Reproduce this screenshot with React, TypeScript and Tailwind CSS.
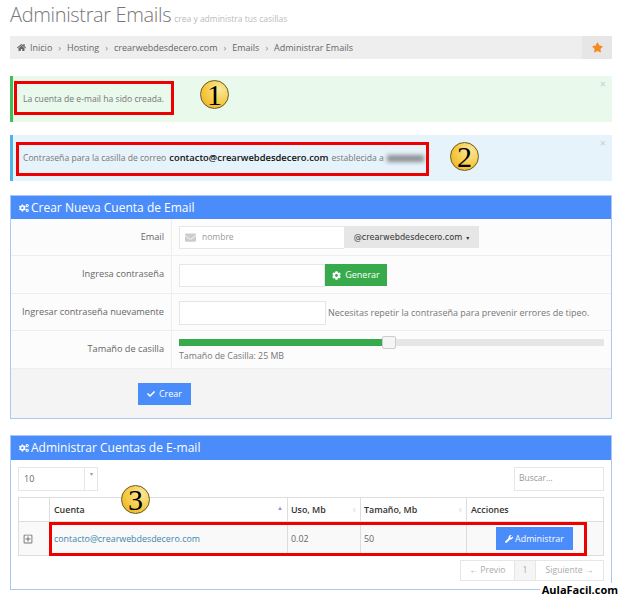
import { FaCheck, FaCog, FaCogs, FaEnvelope, FaHome, FaRegPlusSquare, FaStar, FaWrench } from "react-icons/fa";

const crumbs = ["Hosting", "crearwebdesdecero.com", "Emails", "Administrar Emails"];

function Badge({ n, className }: { n: string; className: string }) {
  return (
    <div
      className={`absolute flex h-[29px] w-[29px] items-center justify-center rounded-full border border-[#6b5a20] bg-[radial-gradient(circle_at_70%_30%,#fbe89a,#f5c63c_60%,#e8a92a)] font-['Liberation_Serif',serif] text-[30px] leading-none text-black ${className}`}
    >
      {n}
    </div>
  );
}

function Row({ label, children, h, pt }: { label: string; children: React.ReactNode; h: string; pt: string }) {
  return (
    <div className={`flex border-b border-[#eeeeee] bg-[#fcfcfc] ${h}`}>
      <div className="w-[161px] shrink-0 border-r border-[#eeeeee] pt-[11px] pr-[7px] text-right text-[9.2px] text-[#666666]">
        {label}
      </div>
      <div className={`flex min-w-0 flex-1 pl-[7px] ${pt}`}>{children}</div>
    </div>
  );
}

export default function App() {
  return (
    <div className="relative h-[597px] w-[618px] overflow-hidden bg-white font-['Open_Sans',sans-serif]">
      <div className="pr-[6px] pl-[10px]">
        <div className="flex h-[36px] items-baseline">
          <h1 className="text-[20px] leading-[30px] font-light tracking-[-0.35px] text-[#777777]">Administrar Emails</h1>
          <span className="ml-[3px] text-[8.5px] text-[#bbbbbb]">crea y administra tus casillas</span>
        </div>

        <div className="flex h-[23px] items-center bg-[#eeeeee] pl-[7px] text-[9px] text-[#666666]">
          <FaHome className="mr-1 text-[9px]" />
          <span>Inicio</span>
          {crumbs.map((c) => (
            <span key={c} className="flex items-center">
              <span className="mx-[6px] text-[#888888]">›</span>
              {c}
            </span>
          ))}
          <div className="ml-auto flex h-full w-[30px] items-center justify-center bg-[#e6e6e6]">
            <FaStar className="text-[11px] text-[#f58a1f]" />
          </div>
        </div>

        <div className="relative mt-[17px] flex h-[46px] items-center border-l-[3px] border-[#3fbf55] bg-[#e9f9ec] pl-[10px] text-[8.6px] text-[#777777]">
          La cuenta de e-mail ha sido creada.
          <span className="absolute top-0 right-[6px] text-[11px] text-[#cccccc]">×</span>
        </div>

        <div className="relative mt-[13px] flex h-[46px] items-center border-l-[3px] border-[#4fb3e8] bg-[#e6f3fa] pl-[10px] text-[8.6px] text-[#777777]">
          <span>Contraseña para la casilla de correo</span>
          <b className="mx-[3px] text-[9.4px] font-semibold text-[#111111]">contacto@crearwebdesdecero.com</b>
          <span>establecida a</span>
          <span className="ml-[3px] h-[7px] w-[37px] bg-[#8a8f93] blur-[2px]" />
          <span className="absolute top-0 right-[6px] text-[11px] text-[#cccccc]">×</span>
        </div>

        <section className="mt-[14px] border border-[#a9c7f7]">
          <h2 className="flex h-[23px] items-center gap-[2px] bg-[#4a8cfa] pl-2 text-[12px] text-white">
            <FaCogs className="text-[10px]" />
            Crear Nueva Cuenta de Email
          </h2>
          <Row label="Email" h="h-[37px]" pt="pt-[7px]">
            <div className="flex h-[23px] w-[165px] items-center border border-[#e6e6e6] border-r-0 bg-white pl-[5px] text-[8.5px] text-[#999999]">
              <FaEnvelope className="mr-[6px] text-[11px] text-[#cccccc]" />
              nombre
            </div>
            <div className="flex h-[22px] w-[135px] items-center justify-center gap-1 bg-[#e6e6e6] font-['DejaVu_Sans',sans-serif] text-[8.2px] text-[#333333]">
              @crearwebdesdecero.com
              <span className="text-[6px]">▾</span>
            </div>
          </Row>
          <Row label="Ingresa contraseña" h="h-[38px]" pt="pt-[8px]">
            <div className="h-[23px] w-[146px] border border-[#e6e6e6] bg-white" />
            <div className="flex h-[22px] w-[62px] items-center justify-center gap-1 bg-[#37aa4b] text-[9px] text-white">
              <FaCog className="text-[9px]" />
              Generar
            </div>
          </Row>
          <Row label="Ingresar contraseña nuevamente" h="h-[37px]" pt="pt-[7px]">
            <div className="h-[24px] w-[147px] border border-[#e6e6e6] bg-white" />
            <span className="ml-[2px] pt-[5px] text-[9px] text-[#777777]">
              Necesitas repetir la contraseña para prevenir errores de tipeo.
            </span>
          </Row>
          <Row label="Tamaño de casilla" h="h-[38px]" pt="pt-[8px]">
            <div className="w-[425px]">
              <div className="relative h-[7px] bg-[#e6e6e6]">
                <div className="h-full w-[49%] bg-[#37aa4b]" />
                <div className="absolute -top-[3px] left-[203px] h-[13px] w-[14px] rounded-[2px] border border-[#cccccc] bg-[#f5f5f5]" />
              </div>
              <div className="mt-[4px] text-[8.8px] text-[#777777]">Tamaño de Casilla: 25 MB</div>
            </div>
          </Row>
          <div className="h-[49px] bg-[#f4f4f4] pt-[14px] pl-[127px]">
            <div className="flex h-[22px] w-[53px] items-center justify-center gap-1 bg-[#4a8cfa] text-[9px] text-white">
              <FaCheck className="text-[8px]" />
              Crear
            </div>
          </div>
        </section>

        <section className="mt-[16px] h-[155px] border border-[#a9c7f7]">
          <h2 className="flex h-[24px] items-center gap-[2px] bg-[#4a8cfa] pl-2 text-[12px] text-white">
            <FaCogs className="text-[10px]" />
            Administrar Cuentas de E-mail
          </h2>
          <div className="px-[7px]">
            <div className="flex justify-between pt-[7px]">
              <div className="flex h-[24px] w-[80px] border border-[#e6e6e6] text-[9px] text-[#666666]">
                <span className="flex-1 pt-[4px] pl-[5px]">10</span>
                <span className="w-[13px] border-l border-[#e6e6e6] pt-[2px] text-center text-[6px] text-[#999999]">▾</span>
              </div>
              <div className="h-[24px] w-[90px] border border-[#e6e6e6] pt-[4px] pl-[4px] text-[8.5px] text-[#999999]">
                Buscar…
              </div>
            </div>

            <table className="mt-[6px] w-[586px] table-fixed border-collapse text-[8.9px] leading-[12px]">
              <thead>
                <tr className="h-[24px] text-left text-[#333333]">
                  <th className="w-[31px] border border-[#dddddd] bg-white" />
                  <th className="relative w-[238px] border border-[#dddddd] pl-[4px] font-semibold">
                    Cuenta
                    <span className="absolute top-[4px] right-[4px] text-[6px] text-[#8f8fd8]">▲</span>
                  </th>
                  <th className="relative w-[73px] border border-[#dddddd] pl-[3px] font-semibold">
                    Uso, Mb
                    <span className="absolute top-[6px] right-[4px] text-[6px] text-[#dddddd]">◊</span>
                  </th>
                  <th className="relative w-[106px] border border-[#dddddd] pl-[3px] font-semibold">
                    Tamaño, Mb
                    <span className="absolute top-[6px] right-[4px] text-[6px] text-[#dddddd]">◊</span>
                  </th>
                  <th className="border border-[#dddddd] pl-[4px] font-semibold">Acciones</th>
                </tr>
              </thead>
              <tbody>
                <tr className="h-[34px] bg-[#f9f9f9] text-[#666666]">
                  <td className="border border-[#dddddd] text-center">
                    <FaRegPlusSquare className="mr-auto ml-[4px] text-[10px] text-[#777777]" />
                  </td>
                  <td className="border border-[#dddddd] pl-[4px] text-[#3a87ad]">contacto@crearwebdesdecero.com</td>
                  <td className="border border-[#dddddd] pl-[3px]">0.02</td>
                  <td className="border border-[#dddddd] pl-[3px]">50</td>
                  <td className="border border-[#dddddd]">
                    <div className="ml-[29px] flex h-[23px] w-[77px] items-center justify-center gap-[2px] bg-[#4a8cfa] text-white">
                      <FaWrench className="text-[8px]" />
                      Administrar
                    </div>
                  </td>
                </tr>
              </tbody>
            </table>

            <div className="mt-[4px] flex justify-end">
              <div className="flex h-[21px] border border-[#e6e6e6] text-[8.6px] text-[#aaaaaa]">
                <span className="flex w-[53px] items-center justify-center">← Previo</span>
                <span className="flex w-[22px] items-center justify-center border-x border-[#e6e6e6] bg-[#f5f5f5]">1</span>
                <span className="flex w-[67px] items-center justify-center">Siguiente →</span>
              </div>
            </div>
          </div>
        </section>
      </div>

      {/* annotations drawn over the screenshot */}
      <div className="absolute top-[81px] left-[14px] h-[34px] w-[160px] border-[3px] border-[#ee0000]" />
      <div className="absolute top-[142px] left-[16px] h-[34px] w-[413px] border-[3px] border-[#ee0000]" />
      <div className="absolute top-[522px] left-[49px] h-[34px] w-[538px] border-[3px] border-[#ee0000]" />
      <Badge n="1" className="top-[80px] left-[200px]" />
      <Badge n="2" className="top-[142px] left-[450px]" />
      <Badge n="3" className="top-[485px] left-[121px]" />
      <div className="absolute right-0 bottom-0 bg-white pl-[2px] text-[11px] leading-[14px] font-bold text-black">
        AulaFacil.com
      </div>
    </div>
  );
}
